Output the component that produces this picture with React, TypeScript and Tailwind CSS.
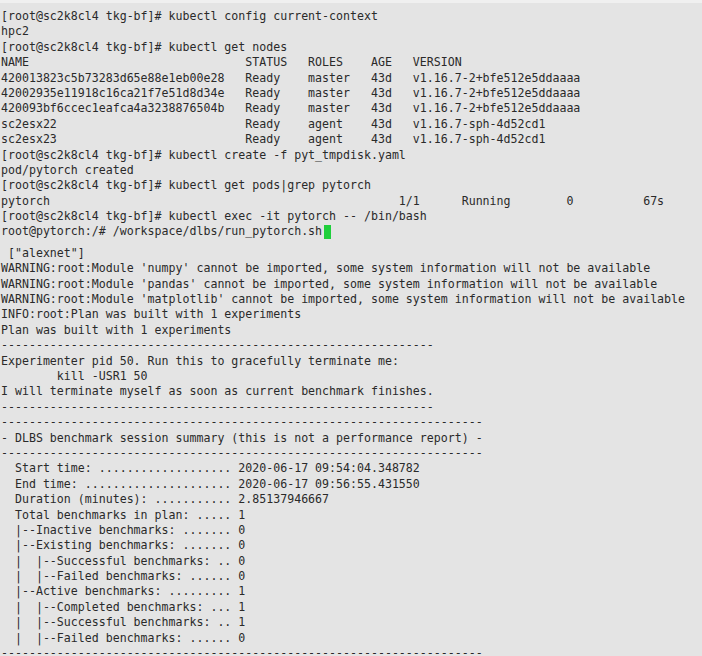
import React from "react";

const P = "[root@sc2k8cl4 tkg-bf]# ";

function pad(s: string, n: number) {
  return s.length >= n ? s : s + " ".repeat(n - s.length);
}

function row(cols: [string, number][]) {
  return cols.map(([s, n]) => pad(s, n)).join("");
}

const dash62 = "-".repeat(62);
const dash69 = "-".repeat(69);

const top: string[] = [
  P + "kubectl config current-context",
  "hpc2",
  P + "kubectl get nodes",
  row([["NAME", 35], ["STATUS", 9], ["ROLES", 9], ["AGE", 6], ["VERSION", 0]]),
  row([["420013823c5b73283d65e88e1eb00e28", 35], ["Ready", 9], ["master", 9], ["43d", 6], ["v1.16.7-2+bfe512e5ddaaaa", 0]]),
  row([["42002935e11918c16ca21f7e51d8d34e", 35], ["Ready", 9], ["master", 9], ["43d", 6], ["v1.16.7-2+bfe512e5ddaaaa", 0]]),
  row([["420093bf6ccec1eafca4a3238876504b", 35], ["Ready", 9], ["master", 9], ["43d", 6], ["v1.16.7-2+bfe512e5ddaaaa", 0]]),
  row([["sc2esx22", 35], ["Ready", 9], ["agent", 9], ["43d", 6], ["v1.16.7-sph-4d52cd1", 0]]),
  row([["sc2esx23", 35], ["Ready", 9], ["agent", 9], ["43d", 6], ["v1.16.7-sph-4d52cd1", 0]]),
  P + "kubectl create -f pyt_tmpdisk.yaml",
  "pod/pytorch created",
  P + "kubectl get pods|grep pytorch",
  row([["pytorch", 57], ["1/1", 9], ["Running", 15], ["0", 11], ["67s", 0]]),
  P + "kubectl exec -it pytorch -- /bin/bash",
];

const bottom: string[] = [
  ' ["alexnet"]',
  "WARNING:root:Module 'numpy' cannot be imported, some system information will not be available",
  "WARNING:root:Module 'pandas' cannot be imported, some system information will not be available",
  "WARNING:root:Module 'matplotlib' cannot be imported, some system information will not be available",
  "INFO:root:Plan was built with 1 experiments",
  "Plan was built with 1 experiments",
  dash62,
  "Experimenter pid 50. Run this to gracefully terminate me:",
  "        kill -USR1 50",
  "I will terminate myself as soon as current benchmark finishes.",
  dash62,
  dash69,
  "- DLBS benchmark session summary (this is not a performance report) -",
  dash69,
  "  Start time: ................... 2020-06-17 09:54:04.348782",
  "  End time: ..................... 2020-06-17 09:56:55.431550",
  "  Duration (minutes): ........... 2.85137946667",
  "  Total benchmarks in plan: ..... 1",
  "  |--Inactive benchmarks: ....... 0",
  "  |--Existing benchmarks: ....... 0",
  "  |  |--Successful benchmarks: .. 0",
  "  |  |--Failed benchmarks: ...... 0",
  "  |--Active benchmarks: ......... 1",
  "  |  |--Completed benchmarks: ... 1",
  "  |  |--Successful benchmarks: .. 1",
  "  |  |--Failed benchmarks: ...... 0",
  dash69,
];

export default function App() {
  return (
    <div className="w-[702px] h-[656px] overflow-hidden bg-[#e4e4e4] border-t-[3px] border-[#f0f0f0] text-[#2a2a2a] font-['DejaVu_Sans_Mono',monospace] text-[11.6px] leading-[15.4px] pt-[6px] pl-[1px]">
      <div className="flex flex-col">
        {top.map((l, i) => (
          <div key={"t" + i} className="whitespace-pre h-[15.4px]">
            {l}
          </div>
        ))}
        <div className="whitespace-pre h-[15.4px] flex items-center">
          <span>root@pytorch:/# /workspace/dlbs/run_pytorch.sh</span>
          <span className="inline-block w-[7px] h-[14px] ml-[2px] bg-[#1fcf3c]" />
        </div>
        <div className="mt-[6px] flex flex-col">
          {bottom.map((l, i) => (
            <div key={"b" + i} className="whitespace-pre h-[15.4px]">
              {l}
            </div>
          ))}
        </div>
      </div>
    </div>
  );
}
